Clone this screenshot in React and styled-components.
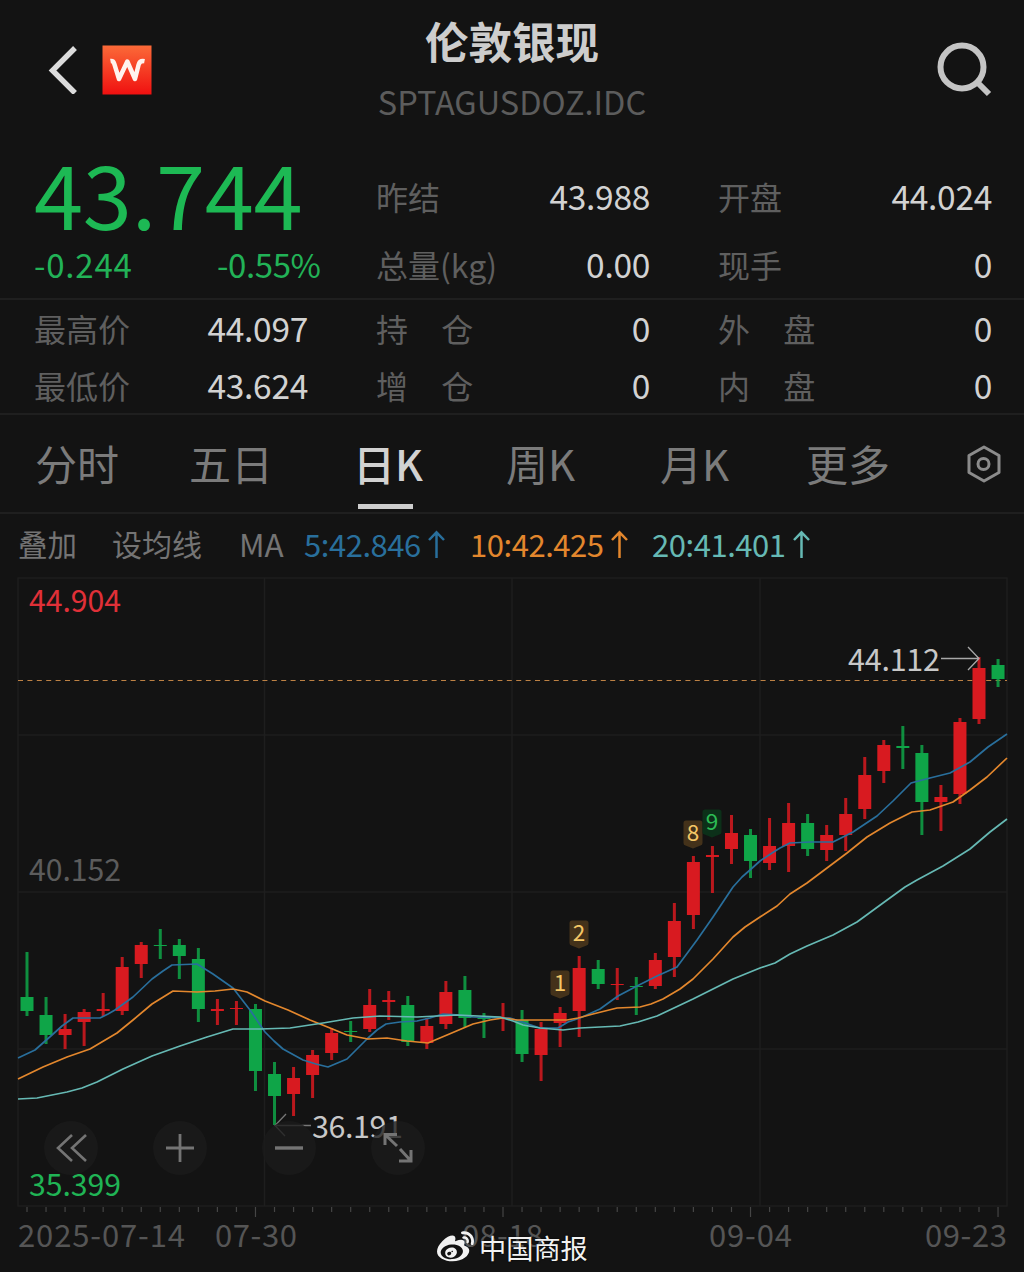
import React from 'react';
import styled, { createGlobalStyle } from 'styled-components';
import { FaWeibo } from 'react-icons/fa';

const GlobalStyle = createGlobalStyle`
  * { box-sizing: border-box; }
  body {
    margin: 0;
    background: #131313;
    font-family: "Noto Sans CJK SC", "Noto Sans", sans-serif;
  }
`;

const Screen = styled.main`
  position: relative;
  width: 1024px;
  height: 1272px;
  overflow: hidden;
  display: flex;
  flex-direction: column;
  background: #131313;
  color: #cfcfcf;
`;

const Header = styled.header`
  display: grid;
  grid-template-columns: 200px 1fr 200px;
  height: 140px;
  flex: none;
`;

const HeaderLeft = styled.div`
  display: flex;
  align-items: center;
  gap: 24px;
  padding-left: 48px;
`;

const HeaderRight = styled.div`
  display: flex;
  align-items: center;
  justify-content: flex-end;
  padding-right: 32px;
`;

const TitleBlock = styled.div`
  display: flex;
  flex-direction: column;
  align-items: center;
  padding-top: 11px;
`;

const Title = styled.h1`
  margin: 0;
  font-size: 43.5px;
  line-height: 60px;
  font-weight: 700;
  color: #cdcdcd;
`;

const Ticker = styled.div`
  font-size: 32.5px;
  line-height: 60px;
  color: #5c5c5c;
  white-space: nowrap;
`;

const QuoteTop = styled.section`
  display: grid;
  grid-template-columns: repeat(3, 274px);
  column-gap: 68px;
  padding: 22px 32px 0 34px;
  height: 160px;
  flex: none;
  border-bottom: 2px solid #1f1f1f;
`;

const QuoteBottom = styled(QuoteTop)`
  height: 115px;
  padding-top: 0;
`;

const Column = styled.div`
  display: flex;
  flex-direction: column;
`;

const LastPrice = styled.div`
  font-size: 88.5px;
  line-height: 58px;
  height: 68px;
  letter-spacing: -0.3px;
  color: #1db954;
`;

const ChangeRow = styled.div`
  display: grid;
  grid-template-columns: 183px auto;
  line-height: 68px;
  font-size: 33px;
  color: #22b257;
  white-space: nowrap;
`;

const Change = styled.span`
  letter-spacing: ${(p) => p.$spacing}px;
`;

const Field = styled.div`
  display: flex;
  justify-content: space-between;
  align-items: center;
  height: ${(p) => p.$height}px;
  line-height: ${(p) => p.$height}px;
  white-space: nowrap;
`;

const Label = styled.span`
  font-size: 32px;
  color: #5f5f5f;
  word-spacing: ${(p) => (p.$spread ? 26 : 0)}px;
`;

const Value = styled.span`
  font-size: 33.5px;
  letter-spacing: -0.3px;
  color: #d2d2d2;
`;

const Tabs = styled.nav`
  display: flex;
  height: 99px;
  flex: none;
  border-bottom: 2px solid #1f1f1f;
`;

const Tab = styled.div`
  width: 154px;
  display: flex;
  flex-direction: column;
  align-items: center;
  font-size: 42px;
  line-height: 95px;
  height: 96px;
  font-weight: ${(p) => (p.$active ? 500 : 400)};
  color: ${(p) => (p.$active ? '#d2d2d2' : '#7b7b7b')};
  padding-left: ${(p) => p.$shift || 0}px;

  &::after {
    content: '';
    width: 55px;
    height: 5px;
    margin-top: -6px;
    margin-left: -6px;
    background: ${(p) => (p.$active ? '#cdcdcd' : 'transparent')};
  }
`;

const TabSettings = styled.div`
  flex: 1;
  display: flex;
  align-items: center;
  padding-left: 43px;
`;

const MaBar = styled.section`
  display: flex;
  align-items: center;
  height: 62px;
  flex: none;
  padding: 0 0 3px 18px;
  font-size: 31px;
  line-height: 59px;
  color: #747474;
  white-space: nowrap;
`;

const MaText = styled.span`
  width: ${(p) => p.$width}px;
  font-size: ${(p) => p.$size || 31.5}px;
  flex: none;
`;

const MaValue = styled.span`
  display: flex;
  align-items: center;
  gap: 7px;
  width: ${(p) => p.$width}px;
  flex: none;
  letter-spacing: -0.45px;
  color: ${(p) => p.$color};
`;

const ChartArea = styled.section`
  position: relative;
  height: 696px;
  flex: none;
`;

const ChartSvg = styled.svg`
  display: block;
  font-family: "Noto Sans CJK SC", "Noto Sans", sans-serif;
`;

const Controls = styled.div`
  position: absolute;
  left: 44px;
  top: 545px;
  display: flex;
  gap: 55px;
`;

const ControlButton = styled.button`
  display: flex;
  align-items: center;
  justify-content: center;
  width: 54px;
  height: 54px;
  padding: 0;
  border: 0;
  border-radius: 50%;
  background: rgba(27, 27, 27, 0.78);
  color: #747474;
`;

const Watermark = styled.div`
  position: absolute;
  left: 437px;
  top: 1228px;
  display: flex;
  align-items: center;
  gap: 5px;
  height: 38px;
  font-size: 27.2px;
  line-height: 38px;
  color: #f2f2f2;
  text-shadow: 0 0 2px #000;
`;

const UP = '#d81a20';
const DOWN = '#0fa548';
const BLUE = '#296f9c';
const ORANGE = '#e3872d';
const TEAL = '#66b9b4';

// [direction, high, low, body top, body bottom] in chart units
const CANDLES = [
  ['d', 952, 1016, 997, 1011], ['d', 997, 1044, 1015, 1035], ['u', 1014, 1049, 1029, 1035],
  ['u', 1009, 1046, 1012, 1022], ['u', 993, 1016, 1009, 1011], ['u', 957, 1015, 967, 1011],
  ['u', 942, 978, 945, 964], ['d', 929, 959, 945, 946], ['d', 939, 979, 945, 956],
  ['d', 948, 1022, 959, 1009], ['u', 999, 1025, 1009, 1011], ['u', 1001, 1025, 1008, 1009],
  ['d', 1004, 1091, 1009, 1071], ['d', 1062, 1125, 1074, 1096], ['u', 1067, 1116, 1078, 1094],
  ['u', 1050, 1098, 1055, 1075], ['u', 1028, 1060, 1033, 1053], ['d', 1021, 1042, 1031, 1032],
  ['u', 989, 1032, 1005, 1029], ['u', 991, 1020, 1000, 1002], ['d', 996, 1046, 1005, 1042],
  ['u', 1018, 1049, 1026, 1043], ['u', 981, 1029, 992, 1024], ['d', 976, 1027, 990, 1018],
  ['d', 1013, 1038, 1018, 1019], ['u', 1003, 1031, 1017, 1018], ['d', 1010, 1062, 1020, 1054],
  ['u', 1022, 1081, 1029, 1055], ['u', 1007, 1047, 1013, 1023], ['u', 956, 1037, 968, 1011],
  ['d', 960, 989, 969, 984], ['u', 968, 1000, 984, 985], ['d', 977, 1015, 986, 987],
  ['u', 953, 989, 960, 986], ['u', 903, 977, 921, 957], ['u', 856, 929, 862, 915],
  ['u', 846, 893, 855, 857], ['u', 815, 864, 833, 849], ['d', 829, 878, 835, 861],
  ['u', 818, 870, 846, 863], ['u', 803, 872, 823, 846], ['d', 814, 856, 823, 849],
  ['u', 825, 861, 835, 850], ['u', 798, 851, 814, 835], ['u', 757, 819, 775, 809],
  ['u', 740, 783, 745, 771], ['d', 726, 769, 746, 748], ['d', 745, 835, 753, 802],
  ['u', 785, 831, 797, 802], ['u', 718, 804, 722, 794], ['u', 657, 724, 668, 719],
  ['d', 659, 687, 665, 679],
];

const MA5 = '18,1058 35,1050 52,1035 62,1026 73,1018 88,1018 100,1018 108,1014 115,1010 133,997 152,979 163,971 172,965 197,964 213,974 233,988 250,1010 265,1032 274,1041 283,1049 303,1060 316,1064 328,1067 347,1059 367,1039 377,1030 386,1024 400,1022 417,1021 430,1018 443,1014 460,1015 473,1017 503,1018 510,1018 525,1023 540,1028 558,1028 568,1022 580,1018 600,1009 618,996 637,986 657,976 677,967 697,940 713,917 733,887 742,877 750,870 760,861 772,853 780,848 790,843 810,842 833,842 853,832 877,816 893,801 911,783 930,778 950,773 970,762 988,747 1007,734';
const MA10 = '18,1079 43,1067 67,1057 90,1049 117,1033 133,1020 152,1004 173,991 197,992 215,991 233,989 247,992 265,1001 288,1010 310,1020 330,1028 347,1035 368,1039 387,1038 407,1041 428,1043 447,1035 473,1024 490,1020 503,1018 517,1020 530,1020 567,1020 578,1018 593,1014 617,1008 640,1007 651,1004 663,999 680,989 693,979 713,959 733,937 745,927 760,917 777,906 790,894 807,883 827,868 847,853 867,837 890,823 912,812 930,810 953,802 970,790 987,777 1007,758';
const MA20 = '18,1099 37,1098 52,1095 67,1092 82,1088 97,1082 123,1069 152,1056 180,1046 207,1037 233,1029 260,1029 290,1028 323,1023 353,1018 380,1016 417,1017 457,1015 500,1017 513,1021 523,1025 540,1028 563,1030 580,1028 600,1027 620,1026 638,1022 657,1016 693,999 733,979 760,968 775,963 790,954 807,946 833,935 857,922 883,903 905,887 917,880 943,866 970,849 990,832 1007,819';

const MARKS = [
  { x: 560, y: 984, n: '1' },
  { x: 579, y: 934, n: '2' },
  { x: 693, y: 834, n: '8' },
  { x: 712, y: 823, n: '9', green: true },
];

const LONG_TICKS = [12, 25, 38, 51];
const candleX = (i) => 27 + i * 19.04;

function Candle({ index, data }) {
  const [dir, high, low, top, bottom] = data;
  const color = dir === 'u' ? UP : DOWN;
  const x = candleX(index);
  return (
    <g fill={color}>
      <rect x={x - 1.5} y={high} width="3" height={low - high} opacity="0.85" />
      <rect x={x - 6.5} y={top} width="13" height={bottom - top} />
    </g>
  );
}

function MarkBadge({ x, y, n, green }) {
  return (
    <g>
      <path
        d={`M${x - 9.5} ${y - 11} q0 -2.5 2.5 -2.5 h14 q2.5 0 2.5 2.5 v20 q0 2 -2 2.5 l-7.5 3 l-7.5 -3 q-2 -0.5 -2 -2.5 z`}
        fill={green ? '#0c3019' : '#44321a'}
      />
      <text x={x} y={y + 7} textAnchor="middle" fontSize="22.5" fill={green ? '#2cbc55' : '#f4c666'}>{n}</text>
    </g>
  );
}

function KLineChart() {
  return (
    <ChartSvg width="1024" height="696" viewBox="0 576 1024 696">
      <g stroke="#1e1e1e" strokeWidth="1.4" fill="none">
        <rect x="18" y="578" width="989" height="628" />
        <path d="M18 735H1007M18 892H1007M18 1049H1007M264.500 578V1206M512 578V1206M760 578V1206" />
      </g>
      <g stroke="#454545" strokeWidth="1.2">
        {CANDLES.map((c, i) => (
          <line key={i} x1={candleX(i)} x2={candleX(i)} y1="1207" y2={LONG_TICKS.includes(i) ? 1217 : 1212} />
        ))}
      </g>
      <line x1="18" x2="1007" y1="680.500" y2="680.500" stroke="#bd8144" strokeWidth="1.2" strokeDasharray="5 4.400" />
      {CANDLES.map((c, i) => <Candle key={i} index={i} data={c} />)}
      <g fill="none" strokeWidth="1.7" strokeLinejoin="round">
        <polyline points={MA5} stroke={BLUE} />
        <polyline points={MA10} stroke={ORANGE} />
        <polyline points={MA20} stroke={TEAL} />
      </g>
      {MARKS.map((m) => <MarkBadge key={m.n} {...m} />)}
      <g fontSize="30.200">
        <text x="29" y="612" fill="#e03038" textLength="92">44.904</text>
        <text x="29" y="881" fill="#5c5c5c" textLength="92">40.152</text>
        <text x="29" y="1196" fill="#20b455" textLength="92">35.399</text>
      </g>
      <g fontSize="30.500" fill="#c8c8c8">
        <text x="848" y="671" textLength="92">44.112</text>
        <text x="312" y="1138" textLength="91">36.191</text>
      </g>
      <g stroke="#a8a8a8" strokeWidth="1.300" fill="none">
        <path d="M941 658.500H979M968 647L979 658.500L968 670" />
        <path d="M311 1125.500H275" stroke="#777" />
        <path d="M286 1114L275 1125.500L285 1136" stroke="#777" />
      </g>
      <g fontSize="31" fill="#555">
        <text x="18" y="1247" textLength="167">2025-07-14</text>
        <text x="215" y="1247" textLength="82">07-30</text>
        <text x="462" y="1247" textLength="81">08-18</text>
        <text x="709" y="1247" textLength="83">09-04</text>
        <text x="925" y="1247" textLength="82">09-23</text>
      </g>
    </ChartSvg>
  );
}

function BackIcon() {
  return (
    <svg width="30" height="48" viewBox="0 0 30 48" fill="none" stroke="#dcdcdc" strokeWidth="5.4">
      <path d="M27 2L4.500 24.500L27 47" />
    </svg>
  );
}

function BrandLogo() {
  return (
    <svg width="50" height="50" viewBox="0 0 50 50">
      <defs>
        <linearGradient id="brand" x1="0" y1="0" x2="0" y2="1">
          <stop offset="0" stopColor="#fb6a38" />
          <stop offset="1" stopColor="#f01010" />
        </linearGradient>
      </defs>
      <rect x="0.500" y="0.500" width="49" height="49" fill="url(#brand)" />
      <path
        d="M8.500 16Q11.300 15.500 12.300 18.800L17 34L25.300 16.500L33 34L36.600 19.800Q37.800 15.300 42.500 16.200"
        fill="none" stroke="#fff3ee" strokeWidth="4.500" strokeLinejoin="round"
      />
    </svg>
  );
}

function SearchIcon() {
  return (
    <svg width="56" height="56" viewBox="0 0 56 56" fill="none" stroke="#c4c4c4">
      <circle cx="26" cy="25" r="21.500" strokeWidth="6" />
      <path d="M41 40L53 52" strokeWidth="6" />
    </svg>
  );
}

function HexIcon() {
  return (
    <svg width="34" height="38" viewBox="0 0 34 38" fill="none" stroke="#8b8b8b" strokeWidth="3" strokeLinejoin="round">
      <path d="M17 2L32 10.500V27.500L17 36L2 27.500V10.500Z" />
      <circle cx="16.500" cy="19" r="5.500" />
    </svg>
  );
}

function ArrowUp() {
  return (
    <svg width="17" height="28" viewBox="0 0 17 28" fill="none" stroke="currentColor" strokeWidth="2.500">
      <path d="M8.500 28V2.500M1 10L8.500 2.300L16 10" />
    </svg>
  );
}

const CONTROL_PATHS = [
  { d: 'M28 14L14 27L28 40M42 14L28 27L42 40', w: 2.6 },
  { d: 'M13 27H41M27 13V41', w: 2.8 },
  { d: 'M13 27H41', w: 3.4 },
  { d: 'M26 25L14.500 14M14 24V13.500H26M29 28L39.500 39.500M40 29V40H28', w: 3 },
];

function QuoteField({ label, value, height, spread }) {
  return (
    <Field $height={height}>
      <Label $spread={spread}>{label}</Label>
      <Value>{value}</Value>
    </Field>
  );
}

const TABS = [
  { name: '分时' }, { name: '五日' }, { name: '日K', active: true, shift: 6 },
  { name: '周K', shift: 3 }, { name: '月K', shift: 3 }, { name: '更多', shift: 2 },
];

export default function App() {
  return (
    <Screen>
      <GlobalStyle />
      <Header>
        <HeaderLeft><BackIcon /><BrandLogo /></HeaderLeft>
        <TitleBlock>
          <Title>伦敦银现</Title>
          <Ticker>SPTAGUSDOZ.IDC</Ticker>
        </TitleBlock>
        <HeaderRight><SearchIcon /></HeaderRight>
      </Header>
      <QuoteTop>
        <Column>
          <LastPrice>43.744</LastPrice>
          <ChangeRow>
            <Change $spacing={0.8}>-0.244</Change>
            <Change $spacing={-0.4}>-0.55%</Change>
          </ChangeRow>
        </Column>
        <Column>
          <QuoteField height={68} label="昨结" value="43.988" />
          <QuoteField height={68} label="总量(kg)" value="0.00" />
        </Column>
        <Column>
          <QuoteField height={68} label="开盘" value="44.024" />
          <QuoteField height={68} label="现手" value="0" />
        </Column>
      </QuoteTop>
      <QuoteBottom>
        <Column>
          <QuoteField height={56.5} label="最高价" value="44.097" />
          <QuoteField height={56.5} label="最低价" value="43.624" />
        </Column>
        <Column>
          <QuoteField height={56.5} label="持 仓" value="0" spread />
          <QuoteField height={56.5} label="增 仓" value="0" spread />
        </Column>
        <Column>
          <QuoteField height={56.5} label="外 盘" value="0" spread />
          <QuoteField height={56.5} label="内 盘" value="0" spread />
        </Column>
      </QuoteBottom>
      <Tabs>
        {TABS.map((t) => <Tab key={t.name} $active={t.active} $shift={t.shift}>{t.name}</Tab>)}
        <TabSettings><HexIcon /></TabSettings>
      </Tabs>
      <MaBar>
        <MaText $width={94} $size={29.5}>叠加</MaText>
        <MaText $width={127} $size={30}>设均线</MaText>
        <MaText $width={65}>MA</MaText>
        <MaValue $width={166} $color={BLUE}>5:42.846<ArrowUp /></MaValue>
        <MaValue $width={182} $color={ORANGE}>10:42.425<ArrowUp /></MaValue>
        <MaValue $width={170} $color={TEAL}>20:41.401<ArrowUp /></MaValue>
      </MaBar>
      <ChartArea>
        <KLineChart />
        <Controls>
          {CONTROL_PATHS.map((c) => (
            <ControlButton key={c.d}>
              <svg width="54" height="54" viewBox="0 0 54 54" fill="none" stroke="currentColor" strokeWidth={c.w}>
                <path d={c.d} />
              </svg>
            </ControlButton>
          ))}
        </Controls>
      </ChartArea>
      <Watermark>
        <FaWeibo size={37} />
        <span>中国商报</span>
      </Watermark>
    </Screen>
  );
}
